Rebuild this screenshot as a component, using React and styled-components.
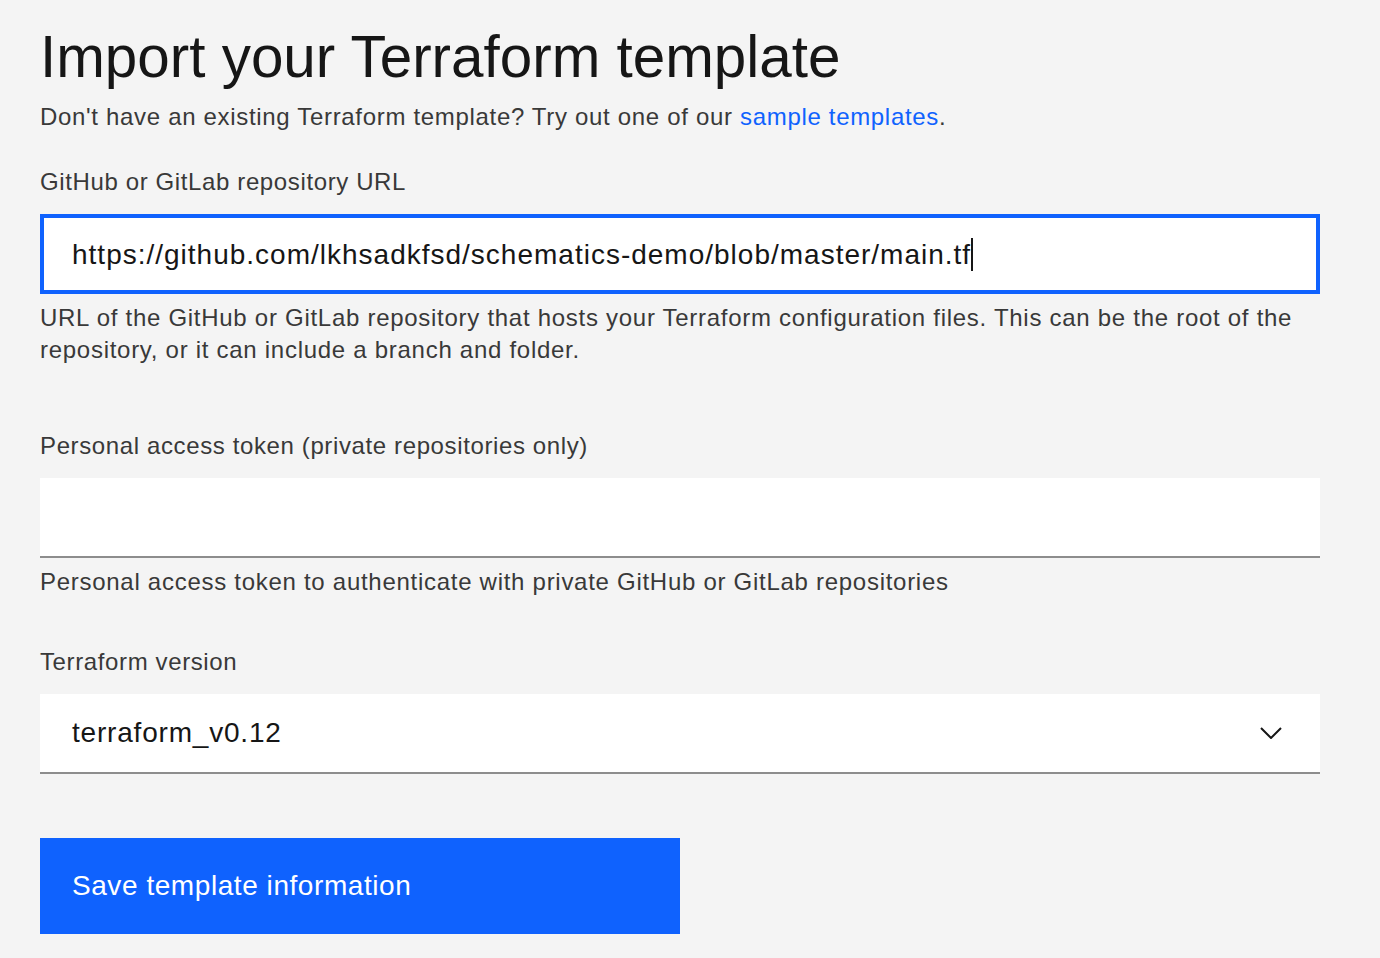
import styled, { createGlobalStyle } from "styled-components";

const GlobalStyle = createGlobalStyle`
  body {
    margin: 0;
    background: #f4f4f4;
    font-family: "Liberation Sans", Arial, sans-serif;
    color: #161616;
  }
`;

const Page = styled.main`
  display: flex;
  flex-direction: column;
  padding: 21px 60px 24px 40px;
`;

const Title = styled.h1`
  margin: 0;
  font-size: 58.4px;
  font-weight: 400;
  line-height: 72px;
  color: #161616;
`;

const Intro = styled.p`
  margin: 8px 0 0;
  font-size: 24px;
  line-height: 32px;
  letter-spacing: 0.68px;
  color: #393939;
`;

const Link = styled.a`
  color: #0f62fe;
  text-decoration: none;
`;

const FieldGroup = styled.div`
  display: flex;
  flex-direction: column;
  margin-top: ${({ gap }) => gap}px;
`;

const Label = styled.label`
  font-size: 24px;
  line-height: 32px;
  letter-spacing: 0.62px;
  color: #393939;
  margin-bottom: 16px;
`;

const Field = styled.div`
  display: flex;
  align-items: center;
  box-sizing: border-box;
  height: 80px;
  background: #fff;
  padding: 0 38px 0 ${({ focused }) => (focused ? 28 : 32)}px;
  border: ${({ focused }) => (focused ? "4px solid #0f62fe" : "none")};
  border-bottom: ${({ focused }) =>
    focused ? "4px solid #0f62fe" : "2px solid #8d8d8d"};
`;

const Value = styled.span`
  flex: 1;
  font-size: 28px;
  letter-spacing: ${({ spacing }) => spacing}px;
  color: #161616;
  white-space: nowrap;
`;

const Caret = styled.span`
  display: inline-block;
  width: 2px;
  height: 33px;
  background: #161616;
  vertical-align: -7px;
`;

const Helper = styled.p`
  margin: 8px 0 0;
  font-size: 24px;
  line-height: 32px;
  letter-spacing: 0.72px;
  color: #393939;
`;

const Chevron = () => (
  <svg width="22" height="12" viewBox="0 0 22 12" fill="none">
    <polyline points="1,1 11,11 21,1" stroke="#161616" strokeWidth="2" />
  </svg>
);

const SaveButton = styled.button`
  align-self: flex-start;
  margin-top: 64px;
  width: 640px;
  height: 96px;
  border: none;
  background: #0f62fe;
  color: #fff;
  font-family: inherit;
  font-size: 28px;
  letter-spacing: 0.56px;
  text-align: left;
  padding: 0 32px;
`;

export default function App() {
  return (
    <>
      <GlobalStyle />
      <Page>
        <Title>Import your Terraform template</Title>
        <Intro>
          Don't have an existing Terraform template? Try out one of our{" "}
          <Link href="#">sample templates</Link>.
        </Intro>

        <FieldGroup gap={33}>
          <Label>GitHub or GitLab repository URL</Label>
          <Field focused>
            <Value spacing={1}>
              https://github.com/lkhsadkfsd/schematics-demo/blob/master/main.tf
              <Caret />
            </Value>
          </Field>
          <Helper>
            URL of the GitHub or GitLab repository that hosts your Terraform
            configuration files. This can be the root of the repository, or it
            can include a branch and folder.
          </Helper>
        </FieldGroup>

        <FieldGroup gap={64}>
          <Label>Personal access token (private repositories only)</Label>
          <Field />
          <Helper>
            Personal access token to authenticate with private GitHub or GitLab
            repositories
          </Helper>
        </FieldGroup>

        <FieldGroup gap={48}>
          <Label>Terraform version</Label>
          <Field>
            <Value spacing={0.8}>terraform_v0.12</Value>
            <Chevron />
          </Field>
        </FieldGroup>

        <SaveButton>Save template information</SaveButton>
      </Page>
    </>
  );
}
